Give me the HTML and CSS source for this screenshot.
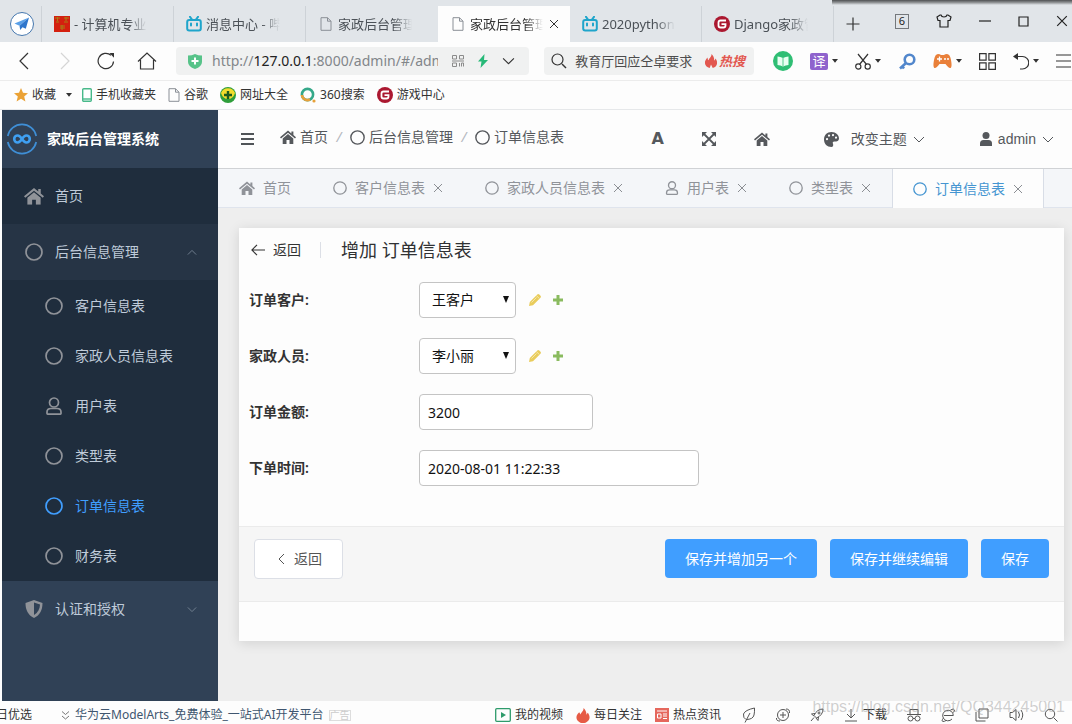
FILE: index.html
```html
<!DOCTYPE html>
<html lang="zh-CN">
<head>
<meta charset="utf-8">
<title>家政后台管理系统</title>
<link rel="stylesheet" href="styles.css">
</head>
<body>
<svg class="defs" aria-hidden="true">
  <symbol id="home" viewBox="0 0 16 14"><path d="M8 .6 0 7.2l1 1.2 7-5.7 7 5.7 1-1.2-2.6-2.2V1.4h-2v2z"/><path d="M8 4 2.7 8.4V14h3.8v-4h3v4h3.800V8.400z"/></symbol>
  <symbol id="circle" viewBox="0 0 16 16"><circle cx="8" cy="8" r="7.100" fill="none" stroke="currentColor" stroke-width="1.500"/></symbol>
  <symbol id="user-o" viewBox="0 0 16 18"><g fill="none" stroke="currentColor" stroke-width="1.700"><circle cx="8" cy="5.500" r="4.500"/><path d="M5 11.500h6c2.500 0 4 1.600 4 3.500v1.500q0 .6-.6.6H1.600q-.6 0-.6-.6V15c0-1.900 1.500-3.500 4-3.500z"/></g></symbol>
  <symbol id="up" viewBox="0 0 12 7"><path d="M1 6l5-5 5 5" fill="none" stroke="currentColor"/></symbol>
  <symbol id="down" viewBox="0 0 12 7"><path d="M1 1l5 5 5-5" fill="none" stroke="currentColor"/></symbol>
  <symbol id="close" viewBox="0 0 10 10"><path d="M1 1l8 8M9 1L1 9" fill="none" stroke="currentColor"/></symbol>
  <symbol id="doc" viewBox="0 0 12 14"><path d="M1 .7h6.500L11 4.200v9.100H1zM7.500.7v3.500H11" fill="none" stroke="#8a8f96"/></symbol>
  <symbol id="bili" viewBox="0 0 16 16"><g fill="none" stroke="#1fa5cb" stroke-width="2"><rect x="1.200" y="4" width="13.600" height="10.500" rx="2"/><path d="M4 .8l2 2.700M12 .8l-2 2.700" stroke-linecap="round"/><path d="M5 7.500v2M11 7.500v2" stroke-linecap="round"/></g></symbol>
  <symbol id="g" viewBox="0 0 16 16"><circle cx="8" cy="8" r="8" fill="#ab1830"/><path d="M12 4.500H6.500Q4.500 4.500 4.500 6.500v3q0 2 2 2h3q2 0 2-2V8.200H7.500" fill="none" stroke="#fff" stroke-width="1.800"/></symbol>
  <symbol id="caret" viewBox="0 0 6 4"><path d="M0 0h6L3 3.800z"/></symbol>
  <symbol id="flame" viewBox="0 0 14 16"><path d="M7.500 0C8 3 5 4.500 4.300 7 3 6.500 3.200 5 3.200 4 1 6 0 8 0 10c0 3 2.500 5.500 5.500 6L7 12l2 4c3-.5 5-3 5-6 0-2-1-4-2-5-.2 1.500-.7 2-1.300 2.300C10.800 4.500 9.500 1.500 7.500 0z"/></symbol>
  <symbol id="pencil" viewBox="0 0 14 14"><path d="M1 13l.8-4L9.300 1.500q1-1 2 0l1.200 1.200q1 1 0 2L5 12.200z" fill="#e9cc5c"/><path d="M3.500 9.500l5-5M8.300 2.500l3.200 3.200" stroke="#f8edbd" stroke-width=".8"/></symbol>
  <symbol id="plus" viewBox="0 0 12 12"><path d="M4.500 1h3v3.500H11v3H7.500V11h-3V7.500H1v-3h3.500z" fill="#8abb5f"/></symbol>
</svg>

<header class="chrome">
  <div class="strip">
    <div class="window-edge"></div>
    <button class="logo-btn" aria-label="浏览器菜单"><svg width="26" height="26" viewBox="0 0 26 26"><circle cx="13" cy="13" r="11.500" fill="#fff" stroke="#4577ae"/><path d="M20 6.500 5.500 12.500l5 2.200z" fill="#5aa0e8"/><path d="M20 6.500l-9.500 8.200.7 4.300 2.300-2.800 3.300 1.500z" fill="#2f76cc"/></svg></button>
    <nav class="tabs">
      <a class="tab" href="#"><svg width="16" height="16" viewBox="0 0 16 16"><path fill="#d4200f" d="M0 0h16v16H0z"/><path d="M1 2h5M3.500 1v4M10 2h5M12 1v4M2 6h3M10 6h4M6 10h5M6 12h5M8 9v5" stroke="#a98016"/></svg><span>- 计算机专业</span></a>
      <a class="tab" href="#"><svg width="16" height="16"><use href="#bili"/></svg><span>消息中心 - 哔哩</span></a>
      <a class="tab plain" href="#"><svg width="12" height="14"><use href="#doc"/></svg><span>家政后台管理</span></a>
      <div class="tab active"><svg width="12" height="14"><use href="#doc"/></svg><span>家政后台管理</span><button aria-label="关闭标签"><svg width="10" height="10"><use href="#close"/></svg></button></div>
      <a class="tab" href="#"><svg width="16" height="16"><use href="#bili"/></svg><span>2020python</span></a>
      <a class="tab" href="#"><svg width="16" height="16"><use href="#g"/></svg><span>Django家政管</span></a>
    </nav>
    <button class="add-tab" aria-label="新标签"><svg width="14" height="14" viewBox="0 0 14 14"><path d="M7 .5v13M.5 7h13" stroke="#333" stroke-width="1.200"/></svg></button>
    <div class="win">
      <button class="count">6</button>
      <button aria-label="皮肤"><svg width="16" height="14" viewBox="0 0 16 14"><path d="M5 1H4L1 3l1 3.500h2V13h8V6.500h2L15 3l-3-2h-1q-.5 2-3 2T5 1z" fill="none" stroke="#222" stroke-width="1.200"/></svg></button>
      <button aria-label="最小化"><svg width="12" height="12"><path d="M0 6h12" stroke="#222" stroke-width="1.200"/></svg></button>
      <button aria-label="最大化"><svg width="11" height="11"><path d="M1 1h9v9H1z" fill="none" stroke="#222" stroke-width="1.200"/></svg></button>
      <button aria-label="关闭"><svg width="12" height="12" viewBox="0 0 10 10"><use href="#close"/></svg></button>
    </div>
  </div>

  <div class="toolbar">
    <div class="nav-btns">
      <button aria-label="后退"><svg width="12" height="18" viewBox="0 0 12 18"><path d="M10 1 2 9l8 8" fill="none" stroke="#333" stroke-width="1.200"/></svg></button>
      <button aria-label="前进"><svg width="12" height="18" viewBox="0 0 12 18"><path d="M2 1l8 8-8 8" fill="none" stroke="#d5d5d5" stroke-width="1.200"/></svg></button>
      <button aria-label="刷新"><svg width="18" height="18" viewBox="0 0 18 18"><path d="M16.500 9.500A7.700 7.700 0 1 1 14 3.300" fill="none" stroke="#333" stroke-width="1.200"/><path d="M12.500 1h4.500v4.800z" fill="#333"/></svg></button>
      <button aria-label="主页"><svg width="20" height="18" viewBox="0 0 20 18"><path d="M1 9.500 10 1l9 8.500M3.500 8v9h13V8" fill="none" stroke="#333" stroke-width="1.200"/></svg></button>
    </div>
    <div class="address">
      <svg width="14" height="15" viewBox="0 0 14 15"><path d="M0 1.500Q4 1.500 7 0q3 1.500 7 1.500V8q0 4.500-7 7Q0 12.500 0 8z" fill="#57c389"/><path d="M7 3.500v7M3.500 7h7" stroke="#fff" stroke-width="2"/></svg>
      <div class="url" role="textbox" aria-label="地址">http://<b>127.0.0.1</b>:8000/admin/#/admin</div>
      <svg width="12" height="12" viewBox="0 0 12 12"><path d="M.5.500h4v3.500h-4zM7.500.5h4v3.500h-4zM.5 8h4v3.500h-4zM7.500 11.500V8M11.500 11.500V8H9.500v3.500M0 6h12" fill="none" stroke="#8b8b8b"/></svg>
      <svg width="10" height="14" viewBox="0 0 10 14"><path d="M6.500 0 0 7.500h3.500L2.500 14 10 6H6z" fill="#27b978"/></svg>
      <svg class="big-down" width="13" height="8" viewBox="0 0 12 7"><use href="#down"/></svg>
    </div>
    <div class="search">
      <svg width="16" height="16" viewBox="0 0 16 16"><path d="M11 11l4 4" stroke="#333" stroke-width="1.400"/><circle cx="6.500" cy="6.500" r="5.500" fill="none" stroke="#333" stroke-width="1.200"/></svg>
      <input aria-label="搜索" value="教育厅回应仝卓要求">
      <a class="hot" href="#"><svg width="14" height="14" viewBox="0 0 14 16"><use href="#flame"/></svg>热搜</a>
    </div>
    <div class="tools">
      <button aria-label="阅读"><svg width="20" height="20" viewBox="0 0 20 20"><circle cx="10" cy="10" r="10" fill="#2fbe74"/><path d="M4.500 5.500q3 0 5.500 1.500 2.500-1.500 5.500-1.500v8.500q-3 0-5.500 1.500Q7.500 14 4.500 14z" fill="#e9fff2"/><path d="M10 7v8" stroke="#2fbe74" stroke-width=".8"/></svg></button>
      <button><span class="trans">译</span><svg width="6" height="4"><use href="#caret"/></svg></button>
      <button aria-label="截图"><svg width="16" height="17" viewBox="0 0 16 17"><g fill="none" stroke="#333" stroke-width="1.200"><circle cx="3.300" cy="13.500" r="2.600"/><circle cx="12.700" cy="13.500" r="2.600"/><path d="M3 1l8.500 10.500M13 1 4.500 11.500"/></g></svg><svg width="6" height="4"><use href="#caret"/></svg></button>
      <button aria-label="密码"><svg width="18" height="17" viewBox="0 0 18 17"><circle cx="11.500" cy="6.500" r="4.800" fill="none" stroke="#5287cc" stroke-width="2.600"/><path d="M8 10l-6 5.500M4 13l2 2.500" stroke="#5287cc" stroke-width="2.600"/></svg></button>
      <button aria-label="游戏"><svg width="19" height="14" viewBox="0 0 19 14"><path d="M5 0q2 0 3 1h3q1-1 3-1 3 0 4 6 1.500 8-1 8-1.500 0-4.500-4h-6Q3.500 14 2 14q-2.500 0-1-8Q2 0 5 0z" fill="#e9803a"/><path d="M4 5h5M6.500 2.500v5" stroke="#fff" stroke-width="1.300"/><circle cx="12" cy="5" r="1" fill="#fff"/><circle cx="15" cy="5" r="1" fill="#fff"/></svg><svg width="6" height="4"><use href="#caret"/></svg></button>
      <button aria-label="扩展"><svg width="17" height="17" viewBox="0 0 17 17"><path d="M.6.6h6.500v6.500H.6zM9.900.6h6.500v6.500H9.900zM.6 9.900h6.500v6.500H.6zM9.900 9.900h6.500v6.500H9.900z" fill="none" stroke="#333" stroke-width="1.200"/></svg></button>
      <button aria-label="恢复"><svg width="16" height="17" viewBox="0 0 16 17"><path d="M2 3.500h7.500a6 6 0 0 1 0 12.500H7" fill="none" stroke="#333" stroke-width="1.200"/><path d="M0 3.500 5 0v7z" fill="#333"/></svg><svg width="6" height="4"><use href="#caret"/></svg></button>
      <button aria-label="菜单"><svg width="15" height="14"><path d="M0 1h15M0 7h15M0 13h15" stroke="#333" stroke-width="1.200"/></svg></button>
    </div>
  </div>

  <nav class="bookmarks">
    <a href="#"><svg width="14" height="14" viewBox="0 0 14 14"><path d="M7 0l2 4.800 5 .4-3.800 3.300 1.200 5L7 10.800 2.600 13.500l1.200-5L0 5.200l5-.4z" fill="#eba235"/></svg>收藏</a>
    <button aria-label="展开收藏"><svg width="6" height="4"><use href="#caret"/></svg></button>
    <a href="#"><svg width="10" height="14" viewBox="0 0 10 14"><rect x=".7" y=".7" width="8.600" height="12.600" rx="1" fill="#fff" stroke="#48b98a" stroke-width="1.400"/><path d="M1 11h8" stroke="#48b98a" stroke-width="1.400"/></svg>手机收藏夹</a>
    <a href="#"><svg width="12" height="14"><use href="#doc"/></svg>谷歌</a>
    <a href="#"><svg width="16" height="16" viewBox="0 0 16 16"><circle cx="8" cy="8" r="8" fill="#2f9e3b"/><path d="M1 6a7.500 7.500 0 0 1 14 0q-2 6-7 6T1 6z" fill="#f3dc2c"/><path d="M8 4v8M4 8h8" stroke="#1d5c1f" stroke-width="2.400"/></svg>网址大全</a>
    <a href="#"><svg width="16" height="16" viewBox="0 0 16 16"><circle cx="7.500" cy="7.500" r="5.600" fill="none" stroke="#35a889" stroke-width="2.600"/><path d="M2 8a5.500 5.500 0 0 0 8 4.500" fill="none" stroke="#e7a13b" stroke-width="2.600"/><circle cx="14" cy="14" r="1.600" fill="#e7a13b"/></svg>360搜索</a>
    <a href="#"><svg width="16" height="16"><use href="#g"/></svg>游戏中心</a>
  </nav>
</header>

<div class="app">
  <aside class="side">
    <div class="brand"><svg width="32" height="32" viewBox="0 0 32 32"><g fill="none" stroke="#3f8fd6" stroke-width="1.700"><path d="M1.800 13A14.500 14.500 0 0 1 30.200 13M1.800 19a14.500 14.500 0 0 0 28.400 0"/><path d="M16 16c-2-3-3.200-3.500-4.300-3.500a3.500 3.500 0 0 0 0 7c1.100 0 2.300-.5 4.300-3.500s3.200-3.500 4.300-3.500a3.500 3.500 0 0 1 0 7c-1.100 0-2.300-.5-4.300-3.500z" stroke="#3fa0f2" stroke-width="2.600"/></g></svg>家政后台管理系统</div>
    <nav class="menu">
      <a class="item dark" href="#"><svg width="20" height="18" viewBox="0 0 16 14"><use href="#home"/></svg>首页</a>
      <a class="item open" href="#"><svg width="18" height="18"><use href="#circle"/></svg><span>后台信息管理</span><svg class="arrow" width="12" height="7"><use href="#up"/></svg></a>
      <div class="sub">
        <a href="#"><svg width="18" height="18"><use href="#circle"/></svg>客户信息表</a>
        <a href="#"><svg width="18" height="18"><use href="#circle"/></svg>家政人员信息表</a>
        <a href="#"><svg width="18" height="18"><use href="#user-o"/></svg>用户表</a>
        <a href="#"><svg width="18" height="18"><use href="#circle"/></svg>类型表</a>
        <a class="current" href="#"><svg width="18" height="18"><use href="#circle"/></svg>订单信息表</a>
        <a href="#"><svg width="18" height="18"><use href="#circle"/></svg>财务表</a>
      </div>
      <a class="item" href="#"><svg width="18" height="18" viewBox="0 0 18 18"><path d="M9 0l8.500 3c0 7-2.500 12-8.500 15C3 15 .5 10 .5 3z"/><path d="M9 2.600l6 2c-.2 4.500-2 8-6 10.400z" fill="#304156"/></svg><span>认证和授权</span><svg class="arrow" width="12" height="7"><use href="#down"/></svg></a>
    </nav>
  </aside>

  <div class="main">
    <div class="topbar">
      <button class="burger" aria-label="折叠菜单"><svg width="13" height="12"><path d="M0 1h13M0 6h13M0 11h13" stroke="#505458" stroke-width="2"/></svg></button>
      <nav class="crumbs">
        <a href="#"><svg width="16" height="14"><use href="#home"/></svg>首页</a><i>/</i>
        <a href="#"><svg width="15" height="15"><use href="#circle"/></svg>后台信息管理</a><i>/</i>
        <a href="#"><svg width="15" height="15"><use href="#circle"/></svg>订单信息表</a>
      </nav>
      <div class="actions">
        <button class="font-btn">A</button>
        <button aria-label="全屏"><svg width="14" height="14" viewBox="0 0 14 14"><path d="M0 0h5L0 5zM14 0v5L9 0zM14 14H9l5-5zM0 14V9l5 5z"/><path d="M2 2l10 10M12 2 2 12" stroke="currentColor" stroke-width="1.800"/></svg></button>
        <button aria-label="主页"><svg width="16" height="14"><use href="#home"/></svg></button>
      </div>
      <button class="theme"><svg width="15" height="15" viewBox="0 0 15 15"><path fill-rule="evenodd" d="M7.500 0C12 0 15 3 15 6.500 15 9 13 9.500 10.500 9.500c-2 0-2 1-1.500 2.300C9.600 13.800 9 15 7.500 15 3 15 0 12 0 7.500S3 0 7.500 0zM3 6a1.100 1.100 0 1 0 .1 2.200A1.100 1.100 0 0 0 3 6zm2-3.500a1.100 1.100 0 1 0 .1 2.200A1.100 1.100 0 0 0 5 2.500zm4-.5a1.100 1.100 0 1 0 .1 2.200A1.100 1.100 0 0 0 9 2zm3 2.500a1.100 1.100 0 1 0 .1 2.200A1.100 1.100 0 0 0 12 4.500z"/></svg><span>改变主题</span><svg width="12" height="7"><use href="#down"/></svg></button>
      <button class="account"><svg width="12" height="14" viewBox="0 0 12 14"><circle cx="6" cy="3.500" r="3.500"/><path d="M0 14v-2.500Q0 8 3.500 8h5Q12 8 12 11.500V14z"/></svg><span>admin</span><svg width="12" height="7"><use href="#down"/></svg></button>
    </div>

    <nav class="page-tabs">
      <a href="#"><svg width="16" height="14"><use href="#home"/></svg><span>首页</span></a>
      <a href="#"><svg width="14" height="14"><use href="#circle"/></svg><span>客户信息表</span><svg class="x" width="10" height="10"><use href="#close"/></svg></a>
      <a href="#"><svg width="14" height="14"><use href="#circle"/></svg><span>家政人员信息表</span><svg class="x" width="10" height="10"><use href="#close"/></svg></a>
      <a href="#"><svg width="14" height="14"><use href="#user-o"/></svg><span>用户表</span><svg class="x" width="10" height="10"><use href="#close"/></svg></a>
      <a href="#"><svg width="14" height="14"><use href="#circle"/></svg><span>类型表</span><svg class="x" width="10" height="10"><use href="#close"/></svg></a>
      <a class="on" href="#"><svg width="14" height="14"><use href="#circle"/></svg><span>订单信息表</span><svg class="x" width="10" height="10"><use href="#close"/></svg></a>
    </nav>

    <main class="content">
      <form class="card">
        <div class="card-head">
          <a href="#"><svg width="14" height="12" viewBox="0 0 14 12"><path d="M6 .8.900 6 6 11.200M1 6h13" fill="none" stroke="currentColor" stroke-width="1.100"/></svg>返回</a>
          <h1>增加 订单信息表</h1>
        </div>
        <div class="fields">
          <div class="row"><label for="customer">订单客户:</label>
            <span class="select"><select id="customer"><option>王客户</option></select><svg width="6" height="7" viewBox="0 0 6 7"><path d="M0 0h6L3 7z"/></svg></span>
            <a href="#" aria-label="修改"><svg width="14" height="14"><use href="#pencil"/></svg></a><a href="#" aria-label="增加"><svg width="12" height="12"><use href="#plus"/></svg></a></div>
          <div class="row"><label for="staff">家政人员:</label>
            <span class="select"><select id="staff"><option>李小丽</option></select><svg width="6" height="7" viewBox="0 0 6 7"><path d="M0 0h6L3 7z"/></svg></span>
            <a href="#" aria-label="修改"><svg width="14" height="14"><use href="#pencil"/></svg></a><a href="#" aria-label="增加"><svg width="12" height="12"><use href="#plus"/></svg></a></div>
          <div class="row"><label for="amount">订单金额:</label><input id="amount" class="short" value="3200"></div>
          <div class="row"><label for="time">下单时间:</label><input id="time" class="long" value="2020-08-01 11:22:33"></div>
        </div>
        <div class="submit">
          <button type="button" class="back"><svg width="7" height="12" viewBox="0 0 7 12"><path d="M6 1 1 6l5 5" fill="none" stroke="currentColor"/></svg>返回</button>
          <button type="button" class="primary">保存并增加另一个</button>
          <button type="button" class="primary">保存并继续编辑</button>
          <button type="button" class="primary">保存</button>
        </div>
      </form>
    </main>
  </div>
</div>

<footer class="status">
  <div class="clip"><a href="#">今日优选</a></div>
  <a class="promo" href="#"><svg width="9" height="9" viewBox="0 0 9 9"><path d="M1 .5l3.500 3L8 .5M1 5l3.500 3L8 5" fill="none" stroke="#777"/></svg>华为云ModelArts_免费体验_一站式AI开发平台<small>广告</small></a>
  <div class="links">
    <a href="#"><svg width="16" height="14" viewBox="0 0 16 14"><rect x=".7" y=".7" width="14.600" height="12.600" rx="1" fill="none" stroke="#2e9b6b" stroke-width="1.300"/><path d="M6 4l5 3-5 3z" fill="#2e9b6b"/></svg>我的视频</a>
    <a href="#"><svg class="red" width="14" height="15" viewBox="0 0 14 16"><path d="M7.500 0C8 3 5 4.500 4.300 7L3 4.500C1 6.500 0 8 0 10c0 3 3 6 7 6s7-3 7-6c0-2-1-4-2-5l-1.300 2.300C10.800 4.500 9.500 1.500 7.500 0z"/></svg>每日关注</a>
    <a href="#"><svg width="14" height="14" viewBox="0 0 14 14"><path d="M0 0h14v14H0z" fill="#e5675c"/><path d="M2 3h10M2.500 6h3.500v4H2.500zM8 6h4M8 8h4M8 10.500h4" fill="none" stroke="#fff"/></svg>热点资讯</a>
  </div>
  <div class="icons">
    <button aria-label="省电"><svg width="14" height="16" viewBox="0 0 14 16"><path d="M12.500 1Q3 3 1.500 7 1 11 4 12.500q7 0 8-4.500.7-3 .5-7zM8 6l-5 9.500"/></svg></button>
    <button aria-label="加速"><svg width="14" height="14" viewBox="0 0 14 14"><circle cx="7" cy="7" r="5.500"/><path d="M7 4v6M4 7h6M.5 10Q0 13 4 13M10 1q4 0 3.500 4"/></svg></button>
    <button aria-label="火箭"><svg width="14" height="14" viewBox="0 0 14 14"><path d="M13 1Q7 1 4 7.500L6.500 10Q13 7 13 1zM5 5.500 1.500 6 4 8M8.500 9 8 12.500 6 10M4 9.500 1 13"/><circle cx="9" cy="5" r="1"/></svg></button>
    <button><svg width="14" height="14" viewBox="0 0 14 14"><path d="M7 1v9M3 6l4 4 4-4M1 13h12"/></svg>下载</button>
    <button aria-label="无痕"><svg width="14" height="14" viewBox="0 0 14 14"><path d="M3 6V1.500h8V6M0 6.500h14M6 10.500h2"/><circle cx="3.500" cy="10.500" r="2.500"/><circle cx="10.500" cy="10.500" r="2.500"/></svg></button>
    <button aria-label="内核"><svg width="14" height="14" viewBox="0 0 14 14"><path d="M3 7.500h9.300A5.300 5.300 0 1 0 11 11M2.500 10Q0 13 2 13.500q1.500 0 3-1M9.500 2q3.500-2 4 0 0 1-1 2.500"/></svg></button>
    <button aria-label="小窗"><svg width="14" height="14" viewBox="0 0 14 14"><path d="M4 1h9v9H4zM1 4v9h9.500"/></svg></button>
    <button aria-label="声音"><svg width="15" height="14" viewBox="0 0 15 14"><path d="M1 4.500h2.500L7 1.500v11L3.500 9.500H1zM9.500 4q2 3 0 6M12 2q3.500 5 0 10"/></svg></button>
    <button aria-label="缩放"><svg width="14" height="14" viewBox="0 0 14 14"><circle cx="6" cy="6" r="4.700"/><path d="M9.500 9.500l4 4"/></svg></button>
  </div>
  <span class="mark">https://blog.csdn.net/QQ344245001</span>
</footer>
</body>
</html>
```

FILE: styles.css
```css
* { box-sizing: border-box; }
body {
  margin: 0;
  min-height: 100vh;
  display: flex;
  flex-direction: column;
  background: #fdfdfd;
  color: #333;
  font: 14px/20px "Noto Sans", "Noto Sans CJK SC", sans-serif;
  overflow-x: hidden;
}
a { color: inherit; text-decoration: none; }
button, input, select { font: inherit; color: inherit; }
button { padding: 0; border: 0; background: none; display: flex; align-items: center; }
svg { flex: none; display: block; fill: currentColor; }
.defs { position: absolute; width: 0; height: 0; }

/* Browser window */
.strip {
  position: relative;
  display: flex;
  height: 42px;
  padding-top: 6px;
  background: #e1e5e9;
}
.window-edge {
  position: absolute;
  top: 0;
  right: 0;
  width: 240px;
  height: 5px;
  background: linear-gradient(#4e5052, #8f9294 50%, #e1e5e9);
}
.logo-btn { width: 42px; padding-left: 9px; border-right: 1px solid #cdd2d7; }
.tabs { display: flex; flex: 0 1 792px; min-width: 0; }
.tab {
  flex: 1 1 0;
  min-width: 0;
  display: flex;
  align-items: center;
  gap: 4px;
  padding: 0 12px;
  color: #4b5157;
  font-size: 13px;
  border-right: 1px solid #cdd2d7;
}
.tab span {
  flex: 0 1 auto;
  max-width: 74px;
  overflow: hidden;
  white-space: nowrap;
  mask-image: linear-gradient(90deg, #000 75%, transparent);
}
.tab.plain, .tab.active { padding: 0 10px 0 14px; gap: 6px; border-right-color: transparent; }
.tab.active { background: #fdfdfd; color: #333; }
.tab.active button { margin-left: auto; }
.add-tab { padding: 0 12px; }
.win { display: flex; align-items: center; gap: 27px; margin-left: auto; padding: 0 4px 6px 0; color: #222; }
.win .count {
  justify-content: center;
  width: 14px;
  height: 15px;
  border: 1px solid #74787c;
  font-size: 11px;
  line-height: 12px;
}

.toolbar {
  display: flex;
  align-items: center;
  height: 39px;
  padding-left: 3px;
  border-bottom: 1px solid #ececec;
}
.nav-btns { display: flex; }
.nav-btns button { width: 41px; justify-content: center; }
.address, .search {
  display: flex;
  align-items: center;
  height: 28px;
  background: #f0f1f1;
  border-radius: 4px;
}
.address { flex: 351 1 0; min-width: 0; margin: 0 15px 0 9px; padding: 0 14px 0 12px; gap: 14px; }
.url {
  flex: 1;
  min-width: 0;
  margin-left: -4px;
  overflow: hidden;
  white-space: nowrap;
  color: #82868a;
  font-size: 14px;
}
.url b { color: #222; font-weight: 400; }
.search { flex: 208 1 0; min-width: 0; padding: 0 9px 0 7px; }
.search input {
  flex: 1;
  min-width: 0;
  margin-left: 8px;
  padding: 0;
  border: 0;
  background: none;
  font-size: 13px;
  color: #4d4d4d;
}
.hot { display: flex; align-items: center; gap: 1px; color: #e2574f; font-size: 13px; font-weight: 700; font-style: italic; }
.tools { display: flex; align-items: center; gap: 17px; padding: 0 1px 0 19px; }
.tools button { gap: 4px; }
.trans { width: 18px; height: 17px; border-radius: 2px; background: #8f63cd; color: #fff; font-size: 13px; line-height: 16px; text-align: center; }

.bookmarks {
  display: flex;
  align-items: center;
  gap: 12px;
  height: 29px;
  padding-left: 14px;
  border-bottom: 1px solid #e6e8ea;
  font-size: 12px;
}
.bookmarks a { display: flex; align-items: center; gap: 4px; }
.bookmarks button { margin: 0 -2px; }

/* Admin */
.app { flex: 1; display: flex; padding-left: 2px; }
.side { flex: none; width: 216px; background: #304156; color: #bfcbd9; }
.brand {
  display: flex;
  align-items: center;
  gap: 9px;
  height: 58px;
  padding-left: 4px;
  color: #fff;
  font-weight: 700;
}
.item { display: flex; align-items: center; gap: 12px; height: 56px; padding: 0 21px 0 23px; }
.item svg, .sub svg { color: #909399; }
.item.dark { background: #1f2d3d; gap: 11px; padding-left: 22px; }
.item.open { background: #263445; }
.item .arrow { margin-left: auto; color: #7d8b9a; width: 10px; }
.sub { padding-top: 1px; background: #1f2d3d; }
.sub a { display: flex; align-items: center; gap: 12px; height: 50px; padding-left: 43px; }
.sub a.current, .sub .current svg { color: #409eff; }

.main { flex: 1; min-width: 0; display: flex; flex-direction: column; background: #eee; }
.topbar {
  display: flex;
  align-items: center;
  height: 59px;
  padding: 0 18px 0 23px;
  background: #fdfdfd;
  border-bottom: 1px solid #d0d2d5;
  color: #55585c;
}
.crumbs { display: flex; align-items: center; margin-left: 26px; padding-bottom: 4px; white-space: nowrap; }
.crumbs a { display: flex; align-items: center; gap: 4px; }
.crumbs i { width: 22px; text-align: center; color: #b4b8bf; }
.actions { display: flex; align-items: center; gap: 38px; margin-left: auto; }
.font-btn { font: 700 16px/20px "DejaVu Sans", sans-serif; }
.theme { gap: 6px; margin-left: 54px; }
.theme span { margin-left: 6px; }
.account { gap: 6px; margin-left: 55px; font-family: "Liberation Sans", sans-serif; }

.page-tabs {
  display: flex;
  height: 39px;
  background: #f4f6f9;
  border-bottom: 1px solid #dfe4ed;
  color: #909399;
  white-space: nowrap;
}
.page-tabs a { display: flex; align-items: center; gap: 8px; padding: 0 21px; }
.page-tabs .x { color: #8b8e93; }
.page-tabs .on {
  height: 39px;
  padding: 0 20px;
  background: #fdfdfd;
  border: solid #d8dde6;
  border-width: 0 1px;
  color: #4595d1;
}

.content { flex: 1; padding: 20px 8px 60px 21px; }
.card { background: #fdfdfd; padding-bottom: 39px; box-shadow: 0 2px 12px rgba(0, 0, 0, .12); }
.card-head { display: flex; align-items: center; height: 44px; padding-left: 12px; }
.card-head a { display: flex; align-items: center; gap: 8px; }
.card-head h1 {
  margin: 0 0 0 19px;
  padding-left: 20px;
  font-size: 18px;
  line-height: 16px;
  font-weight: 400;
  border-left: 1px solid #dcdfe6;
  color: #303133;
}
.fields { display: grid; gap: 20px; padding: 10px 10px 40px; }
.row { display: flex; align-items: center; }
.row label { width: 170px; font-weight: 600; color: #333; }
.row input, .row select {
  height: 36px;
  border: 1px solid #c4c4c4;
  border-radius: 4px;
  background: #fff;
  color: #111;
}
.row input { padding: 0 8px; }
.short { width: 174px; }
.long { width: 280px; }
.select { position: relative; margin-right: 12px; }
.select select { width: 97px; padding: 0 12px; appearance: none; }
.select svg { position: absolute; right: 7px; top: 14px; pointer-events: none; color: #111; }
.row a { margin-right: 10px; }
.submit {
  display: flex;
  align-items: flex-start;
  gap: 13px;
  height: 76px;
  padding: 12px 15px;
  background: #f6f6f6;
  border: solid #ebebeb;
  border-width: 1px 0;
}
.submit button { height: 39px; padding: 0 20px; border-radius: 4px; }
.submit .back { gap: 9px; height: 40px; padding: 0 20px 0 23px; margin-right: auto; background: #fff; border: 1px solid #dcdfe6; color: #555; }
.submit .primary { background: #409eff; color: #fff; }

/* Browser status bar */
.status {
  position: relative;
  display: flex;
  align-items: center;
  height: 23px;
  padding: 5px 14px 0 0;
  overflow: hidden;
  font-size: 12px;
  white-space: nowrap;
}
.clip { display: flex; justify-content: flex-end; width: 32px; overflow: hidden; }
.promo { display: flex; align-items: center; gap: 5px; margin-left: 29px; color: #40566f; }
.promo small { border: 1px solid #ddd; color: #ccc; font-size: 10px; line-height: 9px; }
.links { display: flex; gap: 13px; margin-left: auto; }
.links a { display: flex; align-items: center; gap: 4px; }
.red { color: #e65b45; }
.icons { display: flex; align-items: center; gap: 20px; margin-left: 21px; }
.icons button { gap: 5px; }
.icons svg { fill: none; stroke: #555; }
.mark {
  position: absolute;
  right: 7px;
  top: -4px;
  color: rgba(150, 150, 150, .45);
  font: 16px/20px "Liberation Sans", sans-serif;
}
```
